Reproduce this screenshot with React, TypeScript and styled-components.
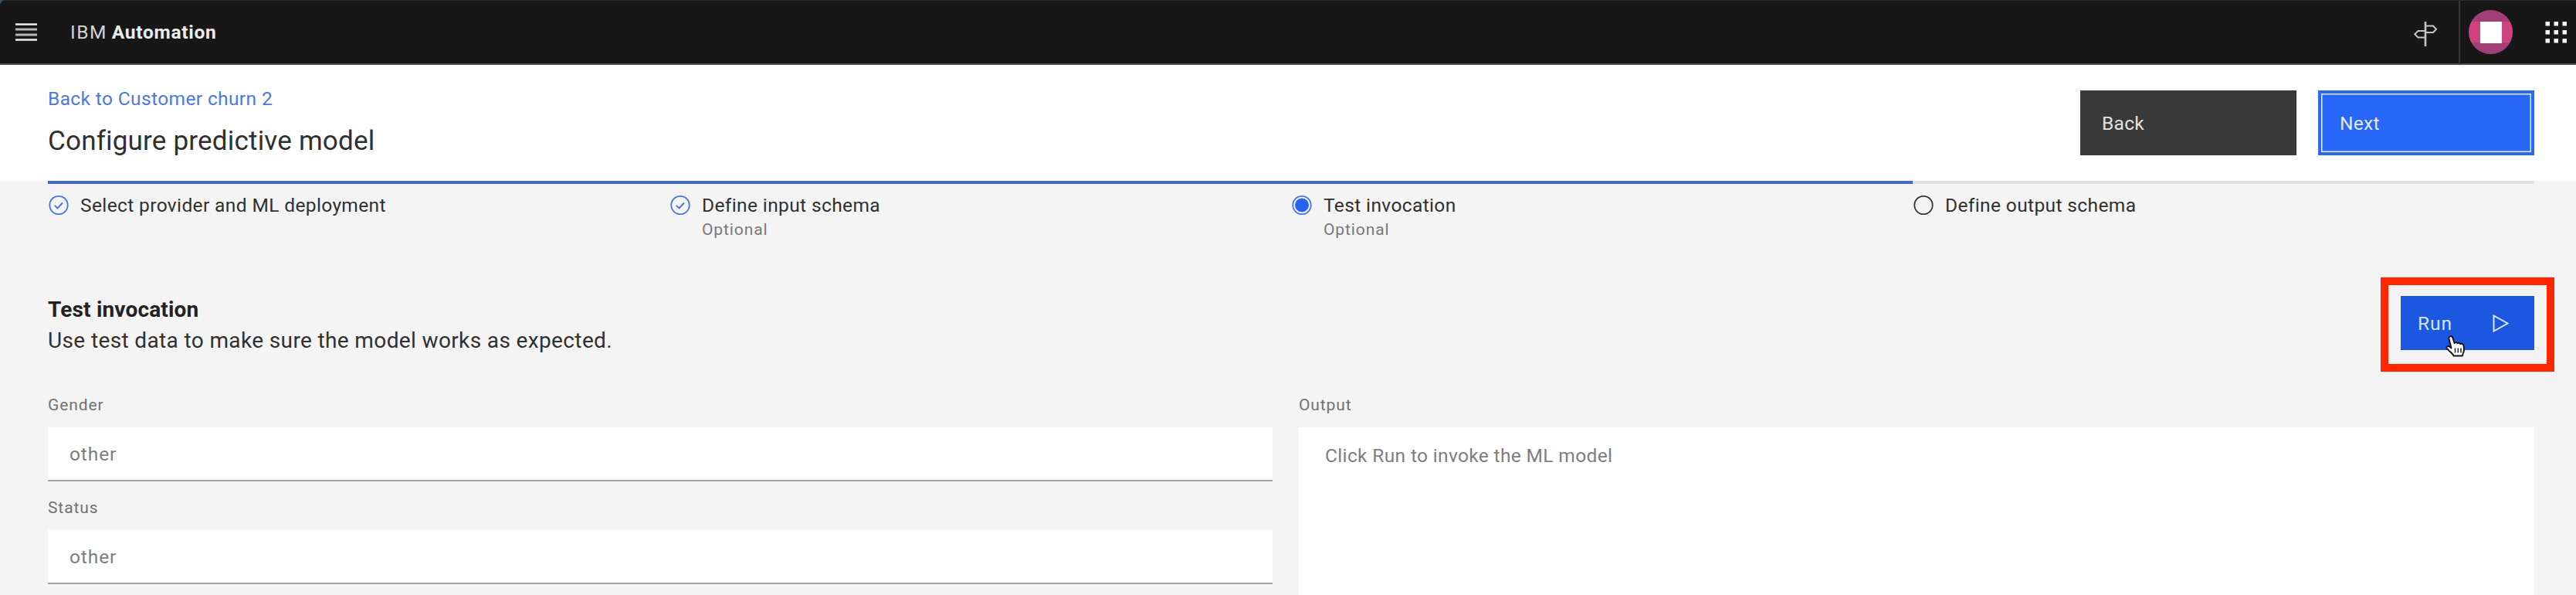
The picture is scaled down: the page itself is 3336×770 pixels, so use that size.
import React from "react";
import styled, { createGlobalStyle } from "styled-components";

const GlobalStyle = createGlobalStyle`
  *, *::before, *::after { box-sizing: border-box; }
  html, body { margin: 0; }
  body {
    background: #f4f4f4;
    color: #303030;
    font-family: Roboto, "Liberation Sans", sans-serif;
    font-size: 24.5px;
    overflow: hidden;
  }
  h1, h2, p { margin: 0; font-weight: 400; }
  button { border: 0; font: inherit; text-align: left; }
`;

const Page = styled.div`
  width: 100%;
  height: 770px;
  display: flex;
  flex-direction: column;
  overflow: hidden;
`;

const Corner = styled.div`
  background: linear-gradient(90deg, #35506b 0 8px, #171717 8px);
  flex: none;
`;

const TopBar = styled.header`
  height: 84px;
  display: flex;
  align-items: center;
  padding-left: 20px;
  background: #171717;
  border-top: 1px solid #2b2b2b;
  border-bottom: 2px solid #4a4a4a;
  border-top-left-radius: 7px;
  color: #ececec;
`;

const MenuIcon = styled.svg`
  width: 28px;
  height: 23px;
`;

const Product = styled.div`
  display: flex;
  margin-left: 43px;
  line-height: 84px;
  gap: 6px;
`;

const Prefix = styled.span`
  letter-spacing: 1.5px;
  color: #d4d4d4;
`;

const ProductName = styled.strong`
  font-weight: 700;
  letter-spacing: 0.7px;
`;

const HeaderTools = styled.div`
  margin-left: auto;
  height: 100%;
  display: flex;
  align-items: center;
`;

const GuideIcon = styled.svg`
  width: 32px;
  height: 34px;
  margin: 4px 27px 0 0;
`;

const UserArea = styled.div`
  height: 100%;
  display: flex;
  align-items: center;
  gap: 42px;
  padding: 0 11px 0 11px;
  border-left: 2px solid #343434;
`;

const Avatar = styled.div`
  width: 57px;
  height: 57px;
  border-radius: 50%;
  display: grid;
  place-items: center;
  background: linear-gradient(
    #a33f78 0 15px, #d0427f 15px 42px, #a33f78 42px
  );
`;

const AvatarMark = styled.div`
  width: 28px;
  height: 28px;
  background: #fff;
`;

const AppsIcon = styled.svg`
  width: 29px;
  height: 28px;
`;

const PageHeader = styled.section`
  height: 150px;
  flex: none;
  display: flex;
  justify-content: space-between;
  padding: 28px 54px 0 62px;
  background: #fff;
`;

const BackLink = styled.a`
  display: block;
  line-height: 32px;
  letter-spacing: 0.38px;
  color: #4d79de;
`;

const PageTitle = styled.h1`
  margin-top: 15px;
  font-size: 35px;
  line-height: 48px;
  letter-spacing: 0.2px;
`;

const HeaderActions = styled.div`
  display: flex;
  gap: 28px;
  margin-top: 5px;
`;

const ActionButton = styled.button<{ $primary?: boolean }>`
  width: 280px;
  height: 84px;
  padding: 0 ${(p) => (p.$primary ? 24 : 28)}px;
  border: ${(p) => (p.$primary ? "4px solid #2968f0" : "0")};
  background: ${(p) => (p.$primary ? "#2766f6" : "#393939")};
  box-shadow: ${(p) => (p.$primary ? "inset 0 0 0 1.5px #e4edff" : "none")};
  color: ${(p) => (p.$primary ? "#e0e9ff" : "#e2e2e2")};
  letter-spacing: 0.3px;
`;

const Steps = styled.ol`
  display: grid;
  grid-template-columns: repeat(3, 805px) 1fr;
  flex: none;
  height: 147px;
  margin: 0 54px 0 62px;
  padding: 0;
  list-style: none;
`;

const Step = styled.li<{ $reached: boolean }>`
  display: flex;
  gap: 15px;
  padding-top: 14px;
  border-top: 4px solid ${(p) => (p.$reached ? "#4269bd" : "#e0e0e0")};
`;

const StepIcon = styled.svg`
  width: 27px;
  height: 27px;
`;

const StepLabel = styled.p`
  line-height: 28px;
  letter-spacing: 0.38px;
`;

const StepNote = styled.p`
  margin-top: 5px;
  font-size: 21px;
  line-height: 24px;
  letter-spacing: 0.9px;
  color: #787878;
`;

const Intro = styled.section`
  display: flex;
  justify-content: space-between;
  flex: none;
  height: 132px;
  padding: 0 54px 0 62px;
`;

const SectionTitle = styled.h2`
  font-size: 28px;
  font-weight: 700;
  line-height: 40px;
  letter-spacing: 0.17px;
  color: #222;
`;

const SectionText = styled.p`
  font-size: 28px;
  line-height: 40px;
  letter-spacing: 0.37px;
`;

const RunArea = styled.div`
  position: relative;
  margin-top: 2px;
`;

const RunButton = styled.button`
  display: flex;
  align-items: center;
  justify-content: space-between;
  width: 173px;
  height: 70px;
  padding: 0 33px 0 22px;
  background: #1b57df;
  color: #dbe5ff;
  letter-spacing: 1px;
`;

const PlayIcon = styled.svg`
  width: 21px;
  height: 23px;
`;

const Highlight = styled.div`
  position: absolute;
  top: -24px;
  left: -26px;
  width: 225px;
  height: 122px;
  border: 10px solid #ff2600;
`;

const Pointer = styled.svg`
  position: absolute;
  left: 56px;
  top: 50px;
  width: 30px;
  height: 32px;
`;

const Content = styled.main`
  display: grid;
  grid-template-columns: 1586px 1fr;
  column-gap: 34px;
  flex: 1;
  min-height: 0;
  padding: 0 54px 0 62px;
`;

const Column = styled.div`
  display: flex;
  flex-direction: column;
`;

const Field = styled.label`
  display: block;
  height: 133px;
`;

const Label = styled.span`
  display: block;
  height: 40px;
  font-size: 21px;
  line-height: 23px;
  letter-spacing: 0.9px;
  color: #727272;
`;

const Input = styled.input`
  display: block;
  width: 100%;
  height: 70px;
  padding: 0 28px;
  border: 0;
  border-bottom: 2px solid #a3a3a3;
  border-radius: 0;
  outline: 0;
  background: #fff;
  font: inherit;
  letter-spacing: 0.9px;
  color: #7e7e7e;
`;

const OutputBox = styled.div`
  flex: 1;
  padding: 22px 34px;
  background: #fff;
  line-height: 30px;
  letter-spacing: 0.35px;
  color: #7e7e7e;
`;

type StepState = "done" | "current" | "todo";

const steps: { label: string; note?: string; state: StepState }[] = [
  { label: "Select provider and ML deployment", state: "done" },
  { label: "Define input schema", note: "Optional", state: "done" },
  { label: "Test invocation", note: "Optional", state: "current" },
  { label: "Define output schema", state: "todo" },
];

const fields = ["Gender", "Status"];

function StepMark({ state }: { state: StepState }) {
  return (
    <StepIcon viewBox="0 0 27 27" fill="none">
      <circle cx="14" cy="13.5" r="11.7" stroke={state === "todo" ? "#333" : "#4474e8"} strokeWidth="1.8" />
      {state === "done" && <path d="M8.800 13.800l3.700 3.700 6.500-7" stroke="#4474e8" strokeWidth="1.9" />}
      {state === "current" && <circle cx="14" cy="13.5" r="9" fill="#2563f2" />}
    </StepIcon>
  );
}

export default function App() {
  return (
    <Page>
      <GlobalStyle />
      <Corner>
        <TopBar>
          <MenuIcon viewBox="0 0 28 23">
            <path d="M0 1.5h28M0 21.5h28" stroke="#f0f0f0" strokeWidth="2.6" />
            <path d="M0 8h28M0 15h28" stroke="#b4b4b4" strokeWidth="3" />
          </MenuIcon>
          <Product>
            <Prefix>IBM</Prefix>
            <ProductName>Automation</ProductName>
          </Product>
          <HeaderTools>
            <GuideIcon viewBox="0 0 32 34" fill="none" stroke="#c4c4c4" strokeWidth="2">
              <path d="M16 1v32" strokeWidth="2.6" />
              <path d="M16 6.5h10l4 4.2-4 4.2H16M16 13H6.5l-4.3 4.2 4.3 4.2H16" />
            </GuideIcon>
            <UserArea>
              <Avatar>
                <AvatarMark />
              </Avatar>
              <AppsIcon viewBox="0 0 29 28" fill="#f4f4f4">
                {[0, 11, 22].map((y) =>
                  [0.5, 11.5, 22.5].map((x) => <rect key={`${x}-${y}`} x={x} y={y} width="5.5" height="5.5" />)
                )}
              </AppsIcon>
            </UserArea>
          </HeaderTools>
        </TopBar>
      </Corner>

      <PageHeader>
        <div>
          <BackLink>Back to Customer churn 2</BackLink>
          <PageTitle>Configure predictive model</PageTitle>
        </div>
        <HeaderActions>
          <ActionButton>Back</ActionButton>
          <ActionButton $primary>Next</ActionButton>
        </HeaderActions>
      </PageHeader>

      <Steps>
        {steps.map((s) => (
          <Step key={s.label} $reached={s.state !== "todo"}>
            <StepMark state={s.state} />
            <div>
              <StepLabel>{s.label}</StepLabel>
              {s.note && <StepNote>{s.note}</StepNote>}
            </div>
          </Step>
        ))}
      </Steps>

      <Intro>
        <div>
          <SectionTitle>Test invocation</SectionTitle>
          <SectionText>Use test data to make sure the model works as expected.</SectionText>
        </div>
        <RunArea>
          <RunButton>
            Run
            <PlayIcon viewBox="0 0 21 23" fill="none">
              <path d="M1.5 1.5v20L19.5 11.5z" stroke="#dde7ff" strokeWidth="2" />
            </PlayIcon>
          </RunButton>
          <Highlight />
          <Pointer viewBox="0 0 30 32">
            <path
              d="M7.5 2.5c2-1 3.500 0 4 2l2 6.500c1.500-1.500 3.300-1 4 .3 1.500-1 3-.6 3.700.7 2-.8 3.800.2 4.300 2.200l.5 5c.2 3-1.500 4.500-2 8.300H12.500c-1-3-5.500-5.500-8.500-9.500-1.500-2.200.8-3.800 2.800-2.500l2.700 2L6.500 5.500c-.3-1.300 0-2.500 1-3z"
              fill="#fff"
              stroke="#111"
              strokeWidth="1.9"
              strokeLinejoin="round"
            />
            <path d="M14.5 17.500v6M18.300 17.500v6M22 17.500v6" stroke="#222" strokeWidth="1.5" />
          </Pointer>
        </RunArea>
      </Intro>

      <Content>
        <Column>
          {fields.map((name) => (
            <Field key={name}>
              <Label>{name}</Label>
              <Input defaultValue="other" />
            </Field>
          ))}
        </Column>
        <Column>
          <Label>Output</Label>
          <OutputBox>Click Run to invoke the ML model</OutputBox>
        </Column>
      </Content>
    </Page>
  );
}
